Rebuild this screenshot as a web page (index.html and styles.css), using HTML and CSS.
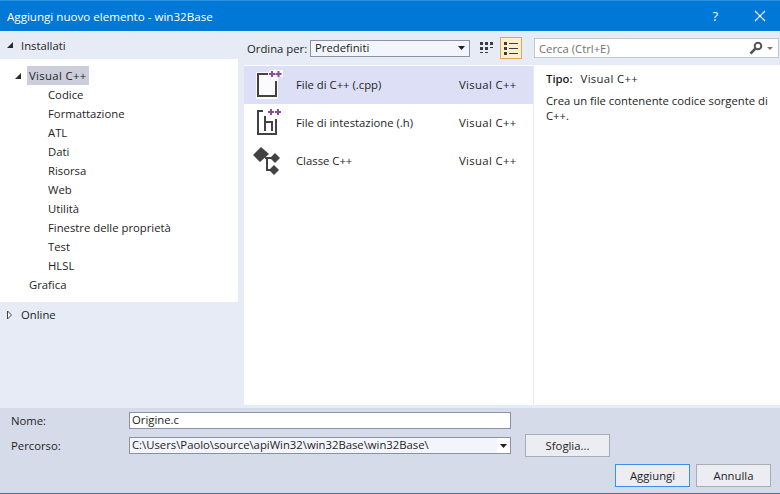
FILE: index.html
```html
<!DOCTYPE html>
<html lang="it">
<head>
<meta charset="utf-8">
<title>Aggiungi nuovo elemento - win32Base</title>
<link rel="stylesheet" href="styles.css">
</head>
<body>
<div class="dialog">
  <header class="titlebar">
    <span class="title">Aggiungi nuovo elemento - win32Base</span>
    <span class="help">?</span>
    <svg class="close" width="12" height="12" viewBox="0 0 12 12"><path d="M1 1l10 10M11 1L1 11" stroke="#fff" stroke-width="1.1" fill="none"/></svg>
  </header>
  <main class="main">
    <aside class="left">
      <div class="section-head">
        <svg class="tri" width="8" height="8" viewBox="0 0 8 8"><path d="M7 1v6H1z" fill="#2a2a2a"/></svg>
        <span>Installati</span>
      </div>
      <div class="tree">
        <div class="node root">
          <svg class="tri" width="8" height="8" viewBox="0 0 8 8"><path d="M7 1v6H1z" fill="#2a2a2a"/></svg>
          <span class="sel">Visual C++</span>
        </div>
        <div class="node child">Codice</div>
        <div class="node child">Formattazione</div>
        <div class="node child">ATL</div>
        <div class="node child">Dati</div>
        <div class="node child">Risorsa</div>
        <div class="node child">Web</div>
        <div class="node child">Utilità</div>
        <div class="node child">Finestre delle proprietà</div>
        <div class="node child">Test</div>
        <div class="node child">HLSL</div>
        <div class="node top">Grafica</div>
      </div>
      <div class="section-head online">
        <svg class="tri" width="8" height="10" viewBox="0 0 8 10"><path d="M1.500 1v8l4-4z" fill="#fff" stroke="#444"/></svg>
        <span>Online</span>
      </div>
    </aside>
    <section class="center">
      <div class="toolbar">
        <span class="sort-label">Ordina per:</span>
        <div class="combo">
          <span class="combo-text">Predefiniti</span>
          <svg width="7" height="4" viewBox="0 0 7 4"><path d="M0 0h7L3.500 4z" fill="#1e1e1e"/></svg>
        </div>
        <button class="view grid">
          <svg width="16" height="16" viewBox="0 0 16 16" fill="#3c3c3c"><rect x="1" y="2" width="3" height="3"/><rect x="6" y="2" width="3" height="3"/><rect x="11" y="2" width="3" height="3"/><rect x="1" y="7" width="3" height="3"/><rect x="6" y="7" width="3" height="3"/><rect x="11" y="7" width="3" height="1"/><rect x="1" y="12" width="3" height="1"/><rect x="6" y="12" width="3" height="1"/></svg>
        </button>
        <button class="view on">
          <svg width="16" height="16" viewBox="0 0 16 16" fill="#3c3c3c"><rect x="1" y="2" width="3" height="3"/><rect x="6" y="3" width="9" height="1"/><rect x="1" y="7" width="3" height="3"/><rect x="6" y="8" width="9" height="1"/><rect x="1" y="12" width="3" height="3"/><rect x="6" y="13" width="9" height="1"/></svg>
        </button>
      </div>
      <div class="list">
        <div class="row selected">
          <svg class="icon" width="28" height="30" viewBox="0 0 28 30">
            <path d="M0 2h13v-2h14v7h-5v22H0z" fill="#fbfbfd"/>
            <path d="M12 4H2V26H20V11" fill="none" stroke="#424242" stroke-width="2"/>
            <path d="M13 4h6M16 1v6M19.500 4h6M22.500 1v6" stroke="#8e4a9c" stroke-width="2" fill="none"/>
          </svg>
          <span class="name">File di C++ (.cpp)</span>
          <span class="lang">Visual C++</span>
        </div>
        <div class="row">
          <svg class="icon" width="28" height="30" viewBox="0 0 28 30">
            <path d="M7 3H2V26H20V11" fill="none" stroke="#424242" stroke-width="2"/>
            <path d="M9 8V23M9 14H16V23" fill="none" stroke="#424242" stroke-width="2"/>
            <path d="M12 4h6M15 1v6M19 4h6M22 1v6" stroke="#8e4a9c" stroke-width="2" fill="none"/>
          </svg>
          <span class="name">File di intestazione (.h)</span>
          <span class="lang">Visual C++</span>
        </div>
        <div class="row">
          <svg class="icon cls" width="32" height="30" viewBox="0 0 32 30">
            <path d="M1 9L9 1l8 7-9 8z" fill="#424242"/>
            <path d="M23 7l5 5-5 5-5-5z" fill="#424242"/>
            <path d="M22 19l5 5-5 5-5-5z" fill="#424242"/>
            <path d="M13 12H20M15 12V24H19" fill="none" stroke="#424242" stroke-width="2"/>
          </svg>
          <span class="name">Classe C++</span>
          <span class="lang">Visual C++</span>
        </div>
      </div>
    </section>
    <section class="right">
      <div class="search">
        <span class="search-text">Cerca (Ctrl+E)</span>
        <svg width="14" height="14" viewBox="0 0 14 14"><circle cx="9" cy="5" r="3.300" fill="none" stroke="#555" stroke-width="2"/><path d="M6.500 7.500L1.500 12.500" stroke="#555" stroke-width="2.500"/></svg>
        <svg class="search-caret" width="6" height="3" viewBox="0 0 6 3"><path d="M0 0h6L3 3z" fill="#777"/></svg>
      </div>
      <div class="details">
        <div class="type"><b>Tipo:</b><span class="cpp">Visual C++</span></div>
        <p class="desc">Crea un file contenente codice sorgente di C++.</p>
      </div>
    </section>
  </main>
  <footer class="footer">
    <div class="field">
      <label class="field-label">Nome:</label>
      <div class="input">Origine.c</div>
    </div>
    <div class="field path">
      <label class="field-label">Percorso:</label>
      <div class="input combo-path">
        <span class="path-text">C:\Users\Paolo\source\apiWin32\win32Base\win32Base\</span>
        <span class="path-arrow"><svg width="7" height="4" viewBox="0 0 7 4"><path d="M0 0h7L3.500 4z" fill="#1e1e1e"/></svg></span>
      </div>
      <button class="btn browse">Sfoglia...</button>
    </div>
    <div class="actions">
      <button class="btn primary">Aggiungi</button>
      <button class="btn">Annulla</button>
    </div>
  </footer>
</div>
</body>
</html>
```
FILE: styles.css
```css
* { box-sizing: border-box; }
html, body { margin: 0; padding: 0; }
body {
  width: 780px;
  height: 494px;
  overflow: hidden;
  font-family: "Open Sans", "Noto Sans", sans-serif;
  font-size: 11.3px;
  color: #1e1e1e;
}
.dialog {
  width: 780px;
  height: 494px;
  display: flex;
  flex-direction: column;
  background: #e6ebf5;
  border-bottom: 1px solid #1a86d9;
}
.titlebar {
  height: 31px;
  flex: none;
  display: flex;
  align-items: center;
  padding: 0 14px 0 7px;
  background: #0078d7;
  border-top: 1px solid #2b90e0;
  color: #fff;
}
.title { flex: 1; font-size: 11.6px; }
.help { font-size: 13px; margin-right: 36px; }
.close { display: block; }
.main {
  flex: none;
  height: 374px;
  display: flex;
}
.left {
  width: 244px;
  flex: none;
}
.section-head {
  height: 28px;
  display: flex;
  align-items: center;
  padding-left: 6px;
  gap: 7px;
}
.section-head .tri { flex: none; }
.tree {
  width: 238px;
  height: 243px;
  background: #fff;
  padding-top: 7px;
}
.node {
  height: 19px;
  line-height: 19px;
  white-space: nowrap;
}
.root { display: flex; align-items: center; padding-left: 14px; gap: 5px; }
.sel {
  background: #cccedb;
  padding: 0 2px;
  width: 62px;
  letter-spacing: .35px;
}
.child { padding-left: 48px; }
.top { padding-left: 29px; }
.online { height: 25px; }
.center {
  width: 290px;
  flex: none;
  display: flex;
  flex-direction: column;
}
.toolbar {
  height: 34px;
  flex: none;
  display: flex;
  align-items: center;
  padding: 0 0 0 3px;
}
.sort-label { width: 63px; flex: none; }
.combo {
  width: 160px;
  height: 17px;
  display: flex;
  align-items: center;
  justify-content: space-between;
  background: #f2f5fc;
  border: 1px solid #8a92a6;
  padding: 0 4px 0 4px;
  margin-right: 8px;
}
.combo-text { margin-bottom: 2px; }
.view {
  width: 22px;
  height: 22px;
  padding: 0;
  border: 1px solid transparent;
  background: none;
  display: flex;
  align-items: center;
  justify-content: center;
}
.view.grid { width: 18px; margin-right: 4px; }
.view.on {
  background: #fdeecd;
  border-color: #d9a860;
}
.list {
  flex: 1;
  background: #fff;
  border-right: 1px solid #e6ebf5;
  padding-top: 1px;
}
.row {
  height: 38px;
  display: flex;
  align-items: center;
  padding-left: 12px;
}
.row.selected { background: #dcdff6; }
.icon { flex: none; margin-right: 12px; }
.cls { margin-left: -4px; }
.name { width: 163px; flex: none; margin-bottom: 2px; }
.lang { flex: none; margin-bottom: 2px; letter-spacing: .35px; }
.right {
  flex: 1;
  display: flex;
  flex-direction: column;
}
.search {
  height: 20px;
  flex: none;
  display: flex;
  align-items: center;
  margin: 7px 1px 7px 0;
  background: #fff;
  border: 1px solid #c0c5d3;
  padding: 0 5px 0 4px;
}
.search-text { flex: 1; color: #717171; }
.search-caret { margin-left: 4px; }
.details {
  flex: 1;
  background: #fff;
  padding: 6px 4px 6px 12px;
}
.type { display: flex; gap: 8px; line-height: 16px; }
.type b { font-weight: 600; }
.cpp { letter-spacing: .35px; }
.desc { margin: 6px 0 0; line-height: 15px; }
.footer {
  flex: 1;
  margin-top: 3px;
  background: #d6dbe9;
  padding: 4px 9px 0 11px;
}
.field {
  display: flex;
  align-items: center;
  height: 17px;
}
.field-label { width: 118px; flex: none; }
.input {
  width: 382px;
  height: 17px;
  flex: none;
  background: #fff;
  border: 1px solid #8a92a6;
  line-height: 14px;
  padding-left: 2px;
  white-space: nowrap;
}
.field.path { margin-top: 8px; }
.combo-path {
  display: flex;
  justify-content: space-between;
  background: #f2f5fc;
  padding-right: 0;
}
.path-arrow {
  width: 13px;
  display: flex;
  align-items: center;
  justify-content: center;
  background: #fff;
}
.btn {
  font: inherit;
  color: #1e1e1e;
  width: 75px;
  height: 23px;
  padding: 0;
  background: #ecedf3;
  border: 1px solid #a9acb3;
}
.browse { width: 85px; margin-left: 14px; }
.actions {
  display: flex;
  justify-content: flex-end;
  gap: 6px;
  margin-top: 10px;
}
.primary { border-color: #3f8fe6; }
```
